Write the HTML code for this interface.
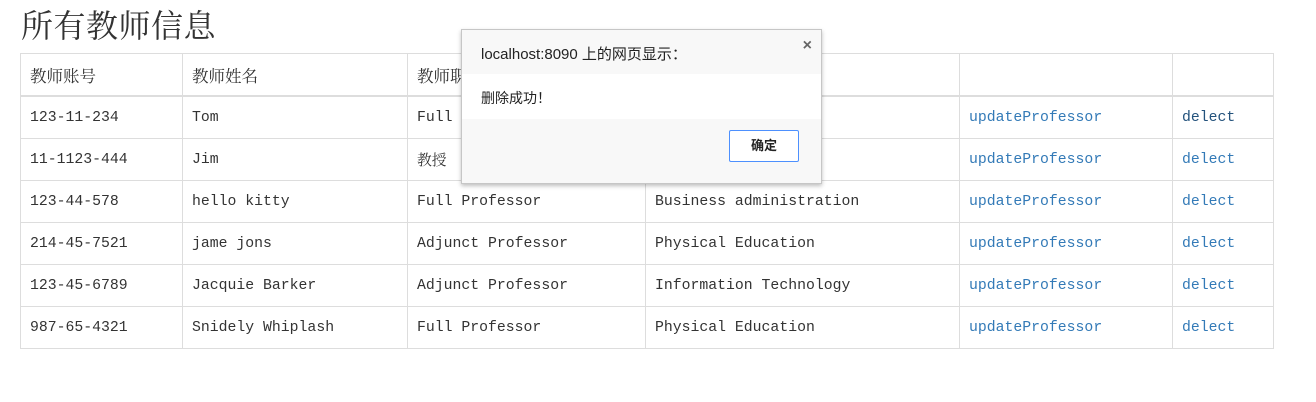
<!DOCTYPE html>
<html><head><meta charset="utf-8">
<style>
body{margin:0;background:#fff;width:1316px;height:402px;overflow:hidden;position:relative;font-family:"Liberation Mono","Noto Serif CJK SC",monospace;color:#333}
h1{position:absolute;left:21px;top:1px;margin:0;font:normal 32px "Liberation Serif","Noto Serif CJK SC",serif;color:#333;letter-spacing:0.5px}
table{position:absolute;left:20px;top:53px;border-collapse:collapse;width:1254px}
td,th{border:1px solid #ddd;padding:0 0 0 9px;height:41px;font-size:14.8px;text-align:left;font-weight:normal;white-space:nowrap}
th{font-family:"Liberation Serif","Noto Serif CJK SC",serif;font-size:16.5px;border-bottom:2px solid #ddd;height:41px}
a{color:#337ab7;text-decoration:none}
a.v{color:#23527c}
.dlg{position:absolute;left:461px;top:29px;width:359px;height:153px;border:1px solid #c6c6c6;background:#f8f8f8;box-shadow:0 2px 4px rgba(0,0,0,.25);font-family:"Liberation Sans","Noto Sans CJK SC",sans-serif;color:#222}
.t{position:absolute;left:19px;top:13px;font-size:15px}
.x{position:absolute;right:9px;top:7px;font-size:16px;color:#666;font-weight:bold}
.b{position:absolute;left:0;top:44px;width:359px;height:45px;background:#fff}
.b span{position:absolute;left:19px;top:14px;font-size:14px}
.btn{position:absolute;left:267px;top:100px;width:68px;height:30px;border:1px solid #4d90fe;border-radius:2px;background:#fff;font-size:13px;font-weight:bold;text-align:center;line-height:30px}
</style></head><body>
<h1>所有教师信息</h1>
<table>
<colgroup><col style="width:162px"><col style="width:225px"><col style="width:238px"><col style="width:314px"><col style="width:213px"><col style="width:101px"></colgroup>
<tr><th>教师账号</th><th>教师姓名</th><th>教师职称</th><th>所属部门</th><th></th><th></th></tr>
<tr><td>123-11-234</td><td>Tom</td><td>Full Professor</td><td>Computer Science</td><td><a href="#">updateProfessor</a></td><td><a class="v" href="#">delect</a></td></tr>
<tr><td>11-1123-444</td><td>Jim</td><td>教授</td><td>Computer Science</td><td><a href="#">updateProfessor</a></td><td><a href="#">delect</a></td></tr>
<tr><td>123-44-578</td><td>hello kitty</td><td>Full Professor</td><td>Business administration</td><td><a href="#">updateProfessor</a></td><td><a href="#">delect</a></td></tr>
<tr><td>214-45-7521</td><td>jame jons</td><td>Adjunct Professor</td><td>Physical Education</td><td><a href="#">updateProfessor</a></td><td><a href="#">delect</a></td></tr>
<tr><td>123-45-6789</td><td>Jacquie Barker</td><td>Adjunct Professor</td><td>Information Technology</td><td><a href="#">updateProfessor</a></td><td><a href="#">delect</a></td></tr>
<tr><td>987-65-4321</td><td>Snidely Whiplash</td><td>Full Professor</td><td>Physical Education</td><td><a href="#">updateProfessor</a></td><td><a href="#">delect</a></td></tr>
</table>
<div class="dlg">
<div class="t">localhost:8090 上的网页显示：</div>
<div class="x">×</div>
<div class="b"><span>删除成功！</span></div>
<div class="btn">确定</div>
</div>
</body></html>
